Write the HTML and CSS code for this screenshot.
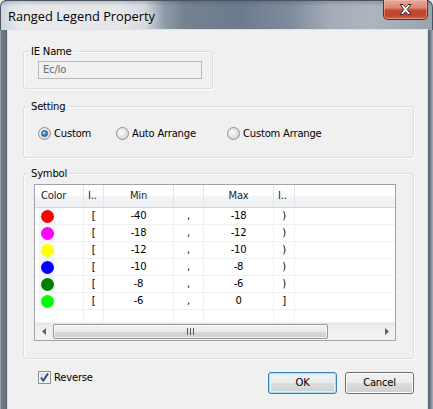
FILE: index.html
```html
<!DOCTYPE html>
<html>
<head>
<meta charset="utf-8">
<title>Ranged Legend Property</title>
<link rel="stylesheet" href="styles.css">
</head>
<body>
<div class="window">
  <div class="titlebar">
    <span class="title">Ranged Legend Property</span>
    <div class="close">
      <svg width="17" height="13" viewBox="0 0 17 13">
        <path d="M3 1.5 L6 1.5 L8.5 4.3 L11 1.5 L14 1.5 L10.2 6.5 L14 11.5 L11 11.5 L8.5 8.7 L6 11.5 L3 11.5 L6.8 6.5 Z" fill="#fff" stroke="#3a2a2a" stroke-width="1" stroke-linejoin="round"/>
      </svg>
    </div>
  </div>
  <div class="client">
    <div class="group group-ie">
      <div class="group-title">IE Name</div>
      <div class="textbox">Ec/Io</div>
    </div>

    <div class="group group-setting">
      <div class="group-title">Setting</div>
      <div class="radios">
        <div class="radio"><span class="radio-btn checked"></span>Custom</div>
        <div class="radio"><span class="radio-btn"></span>Auto Arrange</div>
        <div class="radio"><span class="radio-btn"></span>Custom Arrange</div>
      </div>
    </div>

    <div class="group group-symbol">
      <div class="group-title">Symbol</div>
      <div class="listview">
        <div class="lv-row lv-header">
          <div class="hc left">Color</div>
          <div class="hc left">I..</div>
          <div class="hc">Min</div>
          <div class="hc"></div>
          <div class="hc">Max</div>
          <div class="hc left">I..</div>
          <div class="hc last"></div>
        </div>
        <div class="lv-row">
          <div class="c"><span class="icon"><span class="dot red"></span></span></div>
          <div class="c">[</div><div class="c">-40</div><div class="c">,</div><div class="c">-18</div><div class="c">)</div><div class="c last"></div>
        </div>
        <div class="lv-row">
          <div class="c"><span class="icon"><span class="dot magenta"></span></span></div>
          <div class="c">[</div><div class="c">-18</div><div class="c">,</div><div class="c">-12</div><div class="c">)</div><div class="c last"></div>
        </div>
        <div class="lv-row">
          <div class="c"><span class="icon"><span class="dot yellow"></span></span></div>
          <div class="c">[</div><div class="c">-12</div><div class="c">,</div><div class="c">-10</div><div class="c">)</div><div class="c last"></div>
        </div>
        <div class="lv-row">
          <div class="c"><span class="icon"><span class="dot blue"></span></span></div>
          <div class="c">[</div><div class="c">-10</div><div class="c">,</div><div class="c">-8</div><div class="c">)</div><div class="c last"></div>
        </div>
        <div class="lv-row">
          <div class="c"><span class="icon"><span class="dot green"></span></span></div>
          <div class="c">[</div><div class="c">-8</div><div class="c">,</div><div class="c">-6</div><div class="c">)</div><div class="c last"></div>
        </div>
        <div class="lv-row">
          <div class="c"><span class="icon"><span class="dot lime"></span></span></div>
          <div class="c">[</div><div class="c">-6</div><div class="c">,</div><div class="c">0</div><div class="c">]</div><div class="c last"></div>
        </div>
        <div class="lv-row lv-blank">
          <div class="c"></div><div class="c"></div><div class="c"></div><div class="c"></div><div class="c"></div><div class="c"></div><div class="c last"></div>
        </div>
        <div class="hscroll">
          <div class="sb-arrow">
            <svg width="4" height="7" viewBox="0 0 4 7"><path d="M4 0 L0 3.5 L4 7 Z" fill="#606060"/></svg>
          </div>
          <div class="sb-track">
            <div class="sb-thumb">
              <svg width="7" height="7" viewBox="0 0 7 7"><path d="M0.5 0 V7 M3.5 0 V7 M6.5 0 V7" stroke="#5a5a5a" stroke-width="1"/></svg>
            </div>
          </div>
          <div class="sb-arrow">
            <svg width="4" height="7" viewBox="0 0 4 7"><path d="M0 0 L4 3.5 L0 7 Z" fill="#606060"/></svg>
          </div>
        </div>
      </div>
    </div>

    <div class="footer">
      <div class="check">
        <span class="check-box">
          <svg width="11" height="11" viewBox="0 0 11 11"><path d="M2 5.5 L4.3 8.5 L9 1.5" fill="none" stroke="#2b4c8c" stroke-width="2"/></svg>
        </span>Reverse
      </div>
      <div class="buttons">
        <div class="btn default">OK</div>
        <div class="btn">Cancel</div>
      </div>
    </div>
  </div>
</div>
</body>
</html>
```

FILE: styles.css
```css
html, body {
  margin: 0;
  padding: 0;
}
body {
  background: #e4e7ea;
  font-family: "DejaVu Sans", "Liberation Sans", sans-serif;
  font-size: 10px;
  letter-spacing: -0.2px;
  color: #000;
}
.window {
  width: 433px;
  height: 409px;
  overflow: hidden;
  display: flex;
  flex-direction: column;
  border-radius: 7px 7px 0 0;
  background: linear-gradient(90deg, #b8bec6 0px, #707b8a 1px, #66717f 6px, #4b5562 7px, #4b5562 8px, #4b5562 426px, #3e4854 427px, #56606d 428px, #7c8692 431px, #a9b0b8 433px);
  box-shadow: inset 0 1px 0 #3d4a58;
}
.titlebar {
  height: 30px;
  flex: none;
  display: flex;
  justify-content: space-between;
  align-items: flex-start;
  background:
    linear-gradient(180deg, rgba(40,50,62,0.25) 0px, rgba(255,255,255,0) 6px),
    linear-gradient(90deg, #cfd4d9 0px, #e6e8ea 20px, #e4e6e9 120px, #d4d8dd 145px, #8e99a7 165px, #74828f 185px, #6c7b8e 240px, #7e8b9b 290px, #a3acb7 330px, #adb5bf 370px, #98a2ad 433px);
  border-radius: 7px 7px 0 0;
  box-shadow: inset 0 1px 0 #4a5563, inset 1px 0 0 #4a5563, inset -1px 0 0 #4a5563;
}
.title {
  font-family: "Open Sans", "Noto Sans", sans-serif;
  font-size: 12.8px;
  letter-spacing: 0;
  color: #000;
  margin: 7px 0 0 8px;
  line-height: 18px;
  text-shadow: 0 0 8px rgba(255,255,255,0.9);
}
.close {
  width: 45px;
  height: 20px;
  margin-right: 5px;
  box-sizing: border-box;
  border: 1px solid #6b2a1e;
  border-top: none;
  border-radius: 0 0 5px 5px;
  background: linear-gradient(180deg, #e9a898 0px, #d98772 8px, #c54a30 10px, #c0432a 15px, #d86a4f 20px);
  box-shadow: inset 0 0 0 1px rgba(255,200,190,0.45);
  display: flex;
  align-items: center;
  justify-content: center;
}
.close svg { display: block; }

.client {
  flex: 1;
  margin: 0 6px 0 8px;
  background: #f0f0f0;
  box-shadow: 0 0 0 1px #dde2e7;
  padding: 21px 13px 0 15px;
}

.group {
  border: 1px solid #d5dfe5;
  border-radius: 3px;
  box-shadow: inset 1px 1px 0 #fcfcfc, 1px 1px 0 #fcfcfc;
}
.group-title {
  display: block;
  width: fit-content;
  margin: -7px 0 0 5px;
  padding: 0 2px;
  height: 13px;
  line-height: 13px;
  background: #f0f0f0;
}
.group-ie {
  width: 190px;
  height: 38px;
  box-sizing: border-box;
}
.textbox {
  margin: 3px 0 0 14px;
  width: 164px;
  height: 18px;
  box-sizing: border-box;
  border: 1px solid #b5b9bd;
  background: #f0f0f0;
  color: #6d6d6d;
  padding: 0 0 0 4px;
  line-height: 16px;
}

.group-setting {
  margin-top: 17px;
  height: 52px;
  box-sizing: border-box;
}
.radios {
  margin: 14px 0 0 14px;
  display: grid;
  grid-template-columns: 78px 111px auto;
  align-items: center;
}
.radio {
  display: flex;
  align-items: center;
  height: 13px;
  line-height: 13px;
}
.radio-btn {
  width: 13px;
  height: 13px;
  box-sizing: border-box;
  border-radius: 50%;
  border: 1px solid #8e8f8f;
  background: radial-gradient(circle at 40% 40%, #fbfbfb 0, #e6e6e6 45%, #c9c9c9 100%);
  margin-right: 3px;
  display: flex;
  align-items: center;
  justify-content: center;
  flex: none;
}
.radio-btn.checked::after {
  content: "";
  width: 7px;
  height: 7px;
  border-radius: 50%;
  box-sizing: border-box;
  border: 1px solid #1b4f7d;
  background: radial-gradient(circle at 40% 35%, #b5e6fb 0, #3a9ad9 45%, #1c5f9a 100%);
}

.group-symbol {
  margin-top: 15px;
  height: 186px;
  box-sizing: border-box;
}
.listview {
  margin: 4px 0 0 10px;
  width: 362px;
  height: 157px;
  box-sizing: border-box;
  border: 1px solid #a0a3a8;
  background: #fff;
  display: flex;
  flex-direction: column;
  overflow: hidden;
}
.lv-row {
  display: grid;
  grid-template-columns: 49px 20px 70px 30px 70px 21px 1fr;
  height: 17px;
  flex: none;
}
.lv-header {
  height: 23px;
  background: linear-gradient(180deg, #ffffff 0, #ffffff 45%, #f3f4f6 55%, #eef0f3 100%);
  border-bottom: 1px solid #d5d5d5;
  box-sizing: border-box;
}
.hc {
  border-right: 1px solid #e3e5e8;
  text-align: center;
  line-height: 22px;
  color: #1c2433;
  white-space: nowrap;
  overflow: hidden;
}
.hc.left { text-align: left; padding-left: 6px; }
.lv-header .hc:nth-child(2) { padding-left: 4px; }
.lv-header .hc:nth-child(6) { padding-left: 4px; }
.hc.last { border-right: none; margin-right: 2px; }
.c {
  border-right: 1px solid #f0f0f0;
  border-bottom: 1px solid #f0f0f0;
  text-align: center;
  line-height: 16px;
  white-space: nowrap;
}
.c.last { border-right: none; }
.lv-blank { height: 13px; }
.icon {
  display: flex;
  width: 16px;
  height: 16px;
  margin-left: 4px;
  background: #f2f7fc;
  align-items: center;
  justify-content: center;
}
.dot {
  width: 13px;
  height: 13px;
  border-radius: 50%;
}
.red { background: #ff0000; }
.magenta { background: #ff00ff; }
.yellow { background: #ffff00; }
.blue { background: #0000ff; }
.green { background: #008000; }
.lime { background: #00ff00; }

.hscroll {
  height: 17px;
  flex: none;
  display: flex;
  background: linear-gradient(180deg, #e3e3e3 0, #eeeeee 20%, #f3f3f3 100%);
}
.sb-arrow {
  width: 17px;
  flex: none;
  display: flex;
  align-items: center;
  justify-content: center;
}
.sb-track {
  flex: 1;
  padding-top: 1px;
}
.sb-thumb {
  width: 275px;
  height: 15px;
  margin-left: 1px;
  box-sizing: border-box;
  border: 1px solid #979797;
  border-radius: 2px;
  background: linear-gradient(180deg, #f3f3f3 0, #e9e9e9 50%, #d8d8d8 51%, #cfcfcf 100%);
  box-shadow: inset 0 0 0 1px rgba(255,255,255,0.7);
  display: flex;
  align-items: center;
  justify-content: center;
}
.sb-thumb svg, .sb-arrow svg { display: block; }

.footer {
  display: flex;
  justify-content: space-between;
  align-items: flex-start;
  padding-left: 15px;
}
.check {
  margin-top: 12px;
  display: flex;
  align-items: center;
  height: 13px;
}
.check-box {
  width: 13px;
  height: 13px;
  box-sizing: border-box;
  border: 1px solid #8e8f8f;
  background: linear-gradient(135deg, #dcdcdc 0, #f5f5f5 100%);
  box-shadow: inset 0 0 0 1px #f4f4f4;
  margin-right: 3px;
  display: flex;
  align-items: center;
  justify-content: center;
}
.check-box svg { display: block; }
.buttons {
  margin-top: 13px;
  display: flex;
  gap: 8px;
}
.btn {
  width: 69px;
  height: 22px;
  box-sizing: border-box;
  border: 1px solid #707070;
  border-radius: 3px;
  background: linear-gradient(180deg, #f2f2f2 0, #ebebeb 50%, #dddddd 51%, #cfcfcf 100%);
  box-shadow: inset 0 0 0 1px #fbfbfb;
  text-align: center;
  line-height: 20px;
}
.btn.default {
  border-color: #3c7fb1;
  box-shadow: inset 0 0 0 1px #a6e0fa, inset 0 0 0 2px #dcf2fc;
}
```
